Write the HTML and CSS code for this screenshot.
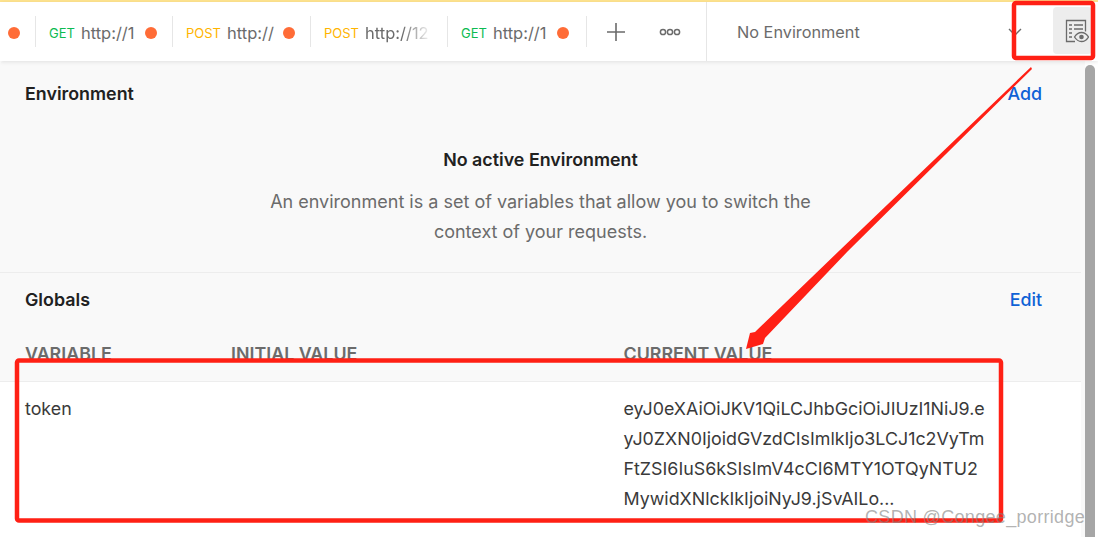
FILE: index.html
```html
<!DOCTYPE html>
<html lang="en">
<head>
<meta charset="utf-8">
<title>Environment</title>
<link rel="stylesheet" href="styles.css">
</head>
<body>
<div class="app">
  <header class="topbar">
    <nav class="tabs">
      <div class="tab tab-first"><span class="dot"></span></div>
      <div class="tab"><span class="method get">GET</span><span class="url">http://1</span><span class="dot"></span></div>
      <div class="tab"><span class="method post">POST</span><span class="url">http://</span><span class="dot"></span></div>
      <div class="tab"><span class="method post">POST</span><span class="url url-fade">http://12</span></div>
      <div class="tab tab-last"><span class="method get">GET</span><span class="url">http://1</span><span class="dot"></span></div>
      <button class="icon-btn plus" aria-label="New tab">
        <svg width="18" height="18" viewBox="0 0 18 18"><path d="M9 0v18M0 9h18" stroke="#6b6b6b" stroke-width="1.6" fill="none"/></svg>
      </button>
      <button class="icon-btn more" aria-label="More">
        <svg width="22" height="8" viewBox="0 0 22 8"><g fill="none" stroke="#6b6b6b" stroke-width="1.5"><circle cx="4" cy="4" r="2.6"/><circle cx="11" cy="4" r="2.6"/><circle cx="18" cy="4" r="2.6"/></g></svg>
      </button>
    </nav>
    <div class="env-select">
      <span class="env-name">No Environment</span>
      <svg class="chevron" width="14" height="8" viewBox="0 0 14 8"><path d="M1 1l6 6 6-6" stroke="#6b6b6b" stroke-width="1.4" fill="none"/></svg>
    </div>
    <button class="eye-btn" aria-label="Environment quick look">
      <svg width="24" height="24" viewBox="0 0 24 24" fill="none" stroke="#6b6b6b" stroke-width="1.3">
        <path d="M10 22.500H1.500V1.500h19v11"/>
        <path d="M4 6h3M9 6h9M4 10h3M9 10h9M4 14h3M4 18h3"/>
        <path d="M9.500 18c2-3.200 4-4.500 7-4.500s5 1.300 7 4.500c-2 3.200-4 4.500-7 4.500s-5-1.300-7-4.500z" fill="#ededed"/>
        <circle cx="16.500" cy="18" r="2.300" fill="#6b6b6b" stroke="none"/>
      </svg>
    </button>
  </header>

  <main class="panel">
    <div class="panel-scroll">
      <section class="env-section">
        <div class="section-head">
          <h2 class="section-title">Environment</h2>
          <a class="link">Add</a>
        </div>
        <div class="empty">
          <h3 class="empty-title">No active Environment</h3>
          <p class="empty-text">An environment is a set of variables that allow you to switch the<br>context of your requests.</p>
        </div>
      </section>
      <section class="globals">
        <div class="section-head">
          <h2 class="section-title">Globals</h2>
          <a class="link">Edit</a>
        </div>
        <div class="var-grid var-head">
          <span>VARIABLE</span><span>INITIAL VALUE</span><span>CURRENT VALUE</span>
        </div>
        <div class="var-grid var-row">
          <span>token</span>
          <span></span>
          <span class="token">eyJ0eXAiOiJKV1QiLCJhbGciOiJIUzI1NiJ9.e<br>yJ0ZXN0IjoidGVzdCIsImlkIjo3LCJ1c2VyTm<br>FtZSI6IuS6kSIsImV4cCI6MTY1OTQyNTU2<br>MywidXNlckIkIjoiNyJ9.jSvAILo...</span>
        </div>
      </section>
    </div>
    <div class="scrollbar"><div class="thumb"></div></div>
  </main>
</div>

<svg class="annotations" width="1098" height="537" viewBox="0 0 1098 537">
  <rect x="1014" y="3" width="79" height="55" rx="2" fill="none" stroke="#ff2015" stroke-width="4.500"/>
  <rect x="17" y="360.500" width="984" height="160" rx="2" fill="none" stroke="#ff2015" stroke-width="4.500"/>
  <polygon fill="#ff2015" points="1031,67 1032,69 848,251 765,338 763,344 746,349 750,333 755,332 840,250"/>
</svg>
<div class="watermark">CSDN @Congee_porridge</div>
</body>
</html>
```

FILE: styles.css
```css
* { box-sizing: border-box; }
html, body { margin: 0; padding: 0; height: 100%; overflow: hidden; background: #fff; }
body { position: relative; font-family: Inter, "Liberation Sans", sans-serif; font-size: 17.850px; color: #212121; }
.app { display: flex; flex-direction: column; height: 537px; border-top: 2px solid #ffe48f; }

.topbar { display: flex; height: 59px; align-items: stretch; background: #fff; box-shadow: 0 1px 4px rgba(0,0,0,.1); position: relative; z-index: 1; }
.tabs { display: flex; align-items: center; width: 707px; border-right: 1px solid #e6e6e6; }
.tab { display: flex; align-items: center; height: 31px; padding: 3px 15px 0 13px; border-right: 1px solid #e6e6e6; }
.tab-first { width: 36px; padding-left: 8px; padding-right: 0; }
.tab:nth-child(2) { width: 137px; }
.tab:nth-child(3) { width: 138px; }
.tab:nth-child(4) { width: 137px; }
.tab-last { width: 139px; padding-right: 17px; }
.method { font-size: 13px; margin-right: 6px; }
.get { color: #0cbb52; }
.post { color: #ffb400; }
.url { flex: 1; color: #6b6b6b; font-size: 16.500px; white-space: nowrap; overflow: hidden; }
.url-fade { -webkit-mask-image: linear-gradient(90deg, #000 55%, transparent); mask-image: linear-gradient(90deg, #000 55%, transparent); }
.dot { flex: none; width: 12px; height: 12px; border-radius: 50%; background: #ff6c37; }
.icon-btn { display: flex; align-items: center; justify-content: center; border: 0; background: none; padding: 0; }
.plus { margin-left: 20px; }
.more { margin-left: 34px; }

.env-select { display: flex; align-items: center; width: 346px; padding: 0 31px 0 30px; justify-content: space-between; }
.env-name { color: #6b6b6b; font-size: 16.300px; }
.eye-btn { display: flex; align-items: center; justify-content: center; width: 39px; height: 47px; margin-top: 5px; padding: 0 0 0 9px; border: 0; border-radius: 4px; background: #ededed; }

.panel { flex: 1; display: flex; min-height: 0; background: #fff; }
.panel-scroll { width: 1085px; display: flex; flex-direction: column; background: #f9f9f9; border-radius: 4px 0 0 0; }
.section-head { display: flex; justify-content: space-between; align-items: center; padding: 0 39px 0 25px; }
.section-title { margin: 0; font-size: 17.850px; font-weight: 600; color: #212121; }
.link { color: #0f62d6; font-size: 17.850px; font-weight: 500; }

.env-section { height: 212px; border-bottom: 1px solid #ededed; margin-right: 4px; padding-top: 22px; }
.empty { text-align: center; margin-top: 44px; }
.empty-title { margin: 0; font-size: 17.850px; font-weight: 600; line-height: 24px; }
.empty-text { margin: 15px 0 0; color: #6b6b6b; font-size: 18px; line-height: 30px; }

.globals { flex: 1; display: flex; flex-direction: column; margin-right: 4px; padding-top: 16px; min-height: 0; }
.var-grid { display: grid; grid-template-columns: 206px 392.500px 1fr; padding-left: 25px; }
.var-head { margin-top: 32px; height: 40px; font-size: 17.850px; font-weight: 600; color: #6b6b6b; line-height: 24px; border-bottom: 1px solid #ededed; }
.var-row { flex: 1; background: #fff; padding-top: 12px; font-size: 17.850px; color: #3a3a3a; line-height: 30px; }
.token { display: block; white-space: nowrap; }

.scrollbar { width: 13px; background: #fff; padding: 4px 3px 0 0; flex: none; }
.thumb { height: 100%; width: 10px; background: #a6a6a6; border-radius: 5px 5px 0 0; }

.annotations { position: absolute; left: 0; top: 0; z-index: 2; pointer-events: none; }
.watermark { position: absolute; left: 865px; top: 505px; z-index: 3; color: rgba(130,130,130,.62); font-family: "Liberation Sans", sans-serif; font-size: 18px; line-height: 24px; letter-spacing: .32px; white-space: nowrap; }
```
